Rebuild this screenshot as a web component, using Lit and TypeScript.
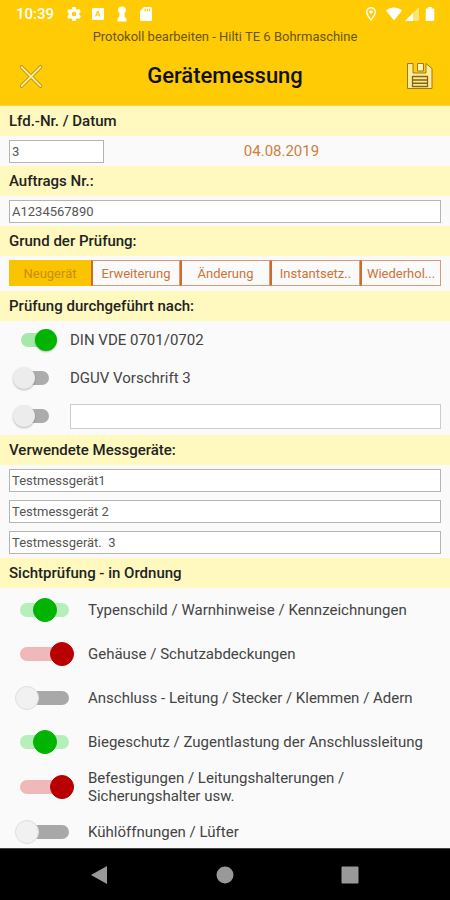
import { LitElement, html, css } from "lit";
import { customElement, property, state } from "lit/decorators.js";
import { classMap } from "lit/directives/class-map.js";

@customElement("status-bar")
class StatusBar extends LitElement {
  static styles = css`
    :host { display: flex; justify-content: space-between; align-items: center; height: 28px; padding: 0 12px 0 16px; color: #fff; }
    .side { display: flex; align-items: center; gap: 8px; }
    .signals { gap: 2px; }
    .time { font-size: 15px; line-height: 28px; font-weight: 500; margin-right: 4px; }
    svg { display: block; width: 16px; height: 16px; fill: currentColor; }
    .pin { margin-right: 5px; }
  `;
  render() {
    return html`
      <div class="side">
        <span class="time">10:39</span>
        <svg viewBox="0 0 16 16"><path fill-rule="evenodd" d="M6.4 1h3.2l.4 2 1.3.8 2-.7 1.5 2.7-1.5 1.4v1.6l1.5 1.4-1.500 2.700-2-.7-1.300.8-.4 2H6.400l-.4-2-1.300-.8-2 .7-1.500-2.700 1.500-1.400V7.200L1.200 5.800l1.500-2.700 2 .7L6 3zM8 5.700a2.300 2.300 0 1 0 0 4.600 2.300 2.300 0 0 0 0-4.600z"/></svg>
        <svg viewBox="0 0 16 16"><path fill-rule="evenodd" d="M3 2h10a1 1 0 0 1 1 1v10a1 1 0 0 1-1 1H3a1 1 0 0 1-1-1V3a1 1 0 0 1 1-1zm2 8.500h1.200l.3-1h2.500l.4 1h1.300L8.500 5H7zm2-2 .8-2 .8 2z"/></svg>
        <svg viewBox="0 0 16 16"><path d="M8 .5C5.600.5 4 2 4 4c0 1.400.6 2.400 1.600 3L5.200 11 3.500 13v2.500h9V13L10.800 11 10.400 7c1-.6 1.600-1.600 1.600-3 0-2-1.600-3.500-4-3.500z"/></svg>
        <svg viewBox="0 0 16 16"><path fill-rule="evenodd" d="M6 1h6.500A1.500 1.500 0 0 1 14 2.500v11a1.500 1.500 0 0 1-1.500 1.500h-9A1.500 1.500 0 0 1 2 13.500V5zm.5 1.800v2.400h1.200V2.800zm2.200 0v2.400h1.200V2.800zm2.200 0v2.400h1.200V2.800z"/></svg>
      </div>
      <div class="side signals">
        <svg class="pin" viewBox="0 0 16 16"><path fill-rule="evenodd" d="M8 1a5 5 0 0 0-5 5c0 3.500 5 9 5 9s5-5.500 5-9a5 5 0 0 0-5-5zm0 1.400A3.600 3.600 0 0 1 11.600 6c0 1.900-2.100 5-3.600 6.900C6.500 11 4.400 7.900 4.400 6A3.600 3.600 0 0 1 8 2.400z"/><circle cx="8" cy="6" r="1.800"/></svg>
        <svg viewBox="0 0 16 16"><path d="M0 4.500C4.500.5 11.500.5 16 4.500L8 14.500z"/></svg>
        <svg viewBox="0 0 16 16"><path opacity=".45" d="M15 1v14H1z"/><path d="M9 7v8H1z"/></svg>
        <svg viewBox="0 0 16 16"><path d="M6 1h4v1.500h1.500a.8.8 0 0 1 .8.8v11a.8.8 0 0 1-.8.8h-7a.8.8 0 0 1-.8-.8v-11a.8.8 0 0 1 .8-.8H6z"/></svg>
      </div>
    `;
  }
}

@customElement("three-way")
class ThreeWay extends LitElement {
  @property({ type: Number }) value = 0;
  @property() text = "";
  static styles = css`
    :host { display: block; }
    .row { display: grid; grid-template-columns: 59px 1fr; column-gap: 14px; align-items: center; min-height: 44px; padding: 0 9px 0 15px; box-sizing: border-box; }
    .switch { display: grid; align-items: center; }
    .track, .knob { grid-area: 1 / 1; }
    .track { height: 14px; margin: 0 5px; border-radius: 7px; background: #a8a8a8; }
    .ok .track { background: #b6efb9; }
    .bad .track { background: #efb9b9; }
    .knob { appearance: none; width: 59px; height: 24px; margin: 0; background: transparent; }
    .knob::-webkit-slider-thumb { appearance: none; width: 24px; height: 24px; border: 1px solid #dedede; border-radius: 50%; background: #f1f1f1; }
    .ok .knob::-webkit-slider-thumb { background: #00b400; border-color: #00b400; }
    .bad .knob::-webkit-slider-thumb { background: #b90000; border-color: #b90000; }
    .text { font-size: 15px; line-height: 18px; padding: 5px 0; color: #444; }
  `;
  render() {
    return html`
      <div class="row">
        <div class=${classMap({ switch: true, ok: this.value === 1, bad: this.value === 2 })}>
          <span class="track"></span>
          <input class="knob" id="k" type="range" min="0" max="2" step="1" .value=${String(this.value)}
            @input=${(e: Event) => { this.value = Number((e.target as HTMLInputElement).value); }} />
        </div>
        <label class="text" for="k">${this.text}</label>
      </div>
    `;
  }
}

@customElement("app-root")
class AppRoot extends LitElement {
  @state() reason = 0;

  reasons = ["Neugerät", "Erweiterung", "Änderung", "Instantsetz..", "Wiederhol..."];
  devices = ["Testmessgerät1", "Testmessgerät 2", "Testmessgerät.  3"];
  checks: [string, number][] = [
    ["Typenschild / Warnhinweise / Kennzeichnungen", 1],
    ["Gehäuse / Schutzabdeckungen", 2],
    ["Anschluss - Leitung / Stecker / Klemmen / Adern", 0],
    ["Biegeschutz / Zugentlastung der Anschlussleitung", 1],
    ["Befestigungen / Leitungshalterungen / Sicherungshalter usw.", 2],
    ["Kühlöffnungen / Lüfter", 0],
  ];

  static styles = css`
    :host { display: flex; flex-direction: column; height: 100vh; background: #fafafa; color: #444; font-family: Roboto, "Liberation Sans", sans-serif; }
    * { box-sizing: border-box; }
    button { font: inherit; border: 0; background: none; padding: 0; }
    .top { flex: none; background: #ffcb05; border-bottom: 1px solid #fbd34a; }
    .subtitle { margin: 0; text-align: center; font-size: 13px; line-height: 18px; color: #6b5608; }
    .bar { display: flex; align-items: center; justify-content: space-between; height: 59px; padding: 0 15px; }
    .title { margin: 0; font-size: 22px; line-height: 28px; font-weight: 500; color: #111; }
    .action { width: 30px; height: 30px; }
    .action svg { display: block; width: 30px; height: 30px; }
    main { flex: 1; min-height: 0; overflow-y: auto; scrollbar-width: none; }
    .band { display: block; margin: 0; padding: 0 9px; font-size: 15px; line-height: 30px; font-weight: 500; color: #222; background: #fff9c0; }
    .line { display: flex; align-items: center; height: 30px; padding: 0 9px; }
    .box { display: block; width: 100%; height: 23px; border: 1px solid #b4b4b4; border-radius: 0; background: #fff; padding: 0 2px; font-family: inherit; font-size: 13px; color: #555; }
    .number { width: 95px; }
    .date { flex: 1; padding-left: 18px; text-align: center; font-size: 15px; color: #cf7f3c; }
    .segments { display: grid; grid-template-columns: 82fr 89fr 90fr 90fr 81fr; margin: 4px 9px 5px; height: 26px; }
    .segment { border: 1px solid #d99a74; border-left-color: #cc6c2c; font-size: 13px; color: #cd7338; white-space: nowrap; }
    .segment + .segment { border-left-width: 2px; }
    .segment.on { background: #fac400; border-color: #fac400; color: #c79013; }
    .option { display: grid; grid-template-columns: 44px 1fr; column-gap: 13px; align-items: center; height: 38px; padding: 0 9px 0 13px; font-size: 15px; }
    .toggle { appearance: none; display: grid; align-items: center; width: 44px; height: 22px; margin: 0; }
    .toggle::before, .toggle::after { content: ""; grid-area: 1 / 1; }
    .toggle::before { height: 14px; margin: 0 8px; border-radius: 7px; background: #acacac; }
    .toggle::after { width: 22px; height: 22px; border-radius: 50%; background: #ececec; box-shadow: 0 1px 2px #0004; }
    .toggle:checked::before { background: #a5e8a8; }
    .toggle:checked::after { justify-self: end; background: #00b400; }
    .tall { height: 25px; border: 1px solid #ccc; }
    .devices { display: grid; gap: 8px; padding: 4px 9px; }
    .nav { flex: none; display: flex; align-items: center; justify-content: space-around; height: 52px; padding: 0 37px; background: #000; border-top: 1px solid #444; }
    .key svg { display: block; width: 20px; height: 20px; fill: #999; }
  `;

  render() {
    return html`
      <header class="top">
        <status-bar></status-bar>
        <p class="subtitle">Protokoll bearbeiten - Hilti TE 6 Bohrmaschine</p>
        <div class="bar">
          <button class="action" aria-label="Schließen">
            <svg viewBox="0 0 30 30" stroke-linecap="round"><path d="M6.500 6l19 19M25.500 6L6.500 25" stroke="#b58d12" stroke-width="3.600"/><path d="M6.500 6l19 19M25.500 6L6.500 25" stroke="#ffeca0" stroke-width="1.800"/></svg>
          </button>
          <h1 class="title">Gerätemessung</h1>
          <button class="action" aria-label="Speichern">
            <svg viewBox="0 0 30 30"><path d="M2.500 2.500h5.500V12h13V2.500l6 5V27.500h-24.500z" fill="#ffeca0" stroke="#a07a10"/><path d="M12.500 2.500h6v7.500h-6z" fill="#fff2bd" stroke="#a07a10"/><path d="M7.500 15.500h15v10h-15z" fill="#ffe792" stroke="#86660c" stroke-width="1.300"/><path d="M8 19h14M8 22.300h14" stroke="#86660c" stroke-width="1.400"/></svg>
          </button>
        </div>
      </header>
      <main>
        <label class="band" for="nr">Lfd.-Nr. / Datum</label>
        <div class="line"><input class="box number" id="nr" value="3" /><span class="date">04.08.2019</span></div>
        <label class="band" for="order">Auftrags Nr.:</label>
        <div class="line"><input class="box" id="order" value="A1234567890" /></div>
        <h2 class="band">Grund der Prüfung:</h2>
        <div class="segments">
          ${this.reasons.map((r, i) => html`<button class=${classMap({ segment: true, on: i === this.reason })} aria-pressed=${i === this.reason} @click=${() => { this.reason = i; }}>${r}</button>`)}
        </div>
        <h2 class="band">Prüfung durchgeführt nach:</h2>
        <div class="option"><input class="toggle" id="din" type="checkbox" checked /><label for="din">DIN VDE 0701/0702</label></div>
        <div class="option"><input class="toggle" id="dguv" type="checkbox" /><label for="dguv">DGUV Vorschrift 3</label></div>
        <div class="option"><input class="toggle" type="checkbox" aria-label="Andere Vorschrift" /><input class="box tall" aria-label="Vorschrift" /></div>
        <h2 class="band">Verwendete Messgeräte:</h2>
        <div class="devices">
          ${this.devices.map((d, i) => html`<input class="box" aria-label="Messgerät ${i + 1}" .value=${d} />`)}
        </div>
        <h2 class="band">Sichtprüfung - in Ordnung</h2>
        ${this.checks.map(([text, value]) => html`<three-way .text=${text} .value=${value}></three-way>`)}
      </main>
      <nav class="nav">
        <button class="key" aria-label="Zurück"><svg viewBox="0 0 20 20"><path d="M17 1v18L1 10z"/></svg></button>
        <button class="key" aria-label="Startseite"><svg viewBox="0 0 20 20"><circle cx="10" cy="10" r="8.500"/></svg></button>
        <button class="key" aria-label="Übersicht"><svg viewBox="0 0 20 20"><rect x="1.500" y="1.500" width="17" height="17" rx="1"/></svg></button>
      </nav>
    `;
  }
}
